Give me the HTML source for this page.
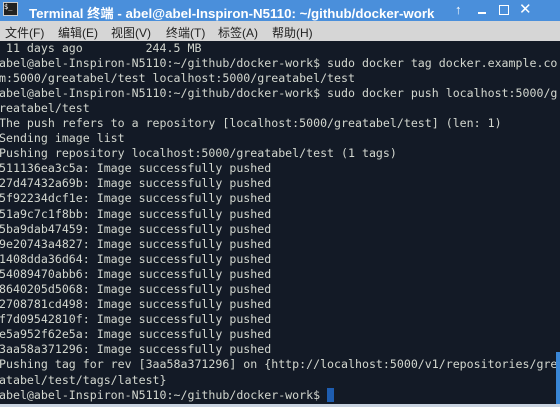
<!DOCTYPE html>
<html><head><meta charset="utf-8"><style>
html,body{margin:0;padding:0;width:560px;height:407px;overflow:hidden;background:#131a26}
#title{position:absolute;left:0;top:0;width:560px;height:21px;background:#4a8fdb;color:#fff;font:bold 13.3px "Liberation Sans","Noto Sans CJK SC",sans-serif;}
#title .t{position:absolute;left:29px;top:3px;white-space:nowrap}
#icon{position:absolute;left:3px;top:2px;width:13px;height:12px;background:#222;border:1px solid #ccc;color:#fff;font:7px "DejaVu Sans Mono",monospace;line-height:8px}
#menu{position:absolute;left:0;top:21px;width:560px;height:20px;background:#d6d6d6;color:#222;font:12px "Liberation Sans","Noto Sans CJK SC",sans-serif}
#menu span{position:absolute;top:3px;white-space:nowrap}
#term{position:absolute;left:-1px;top:40.5px;font-family:"DejaVu Sans Mono",monospace;font-size:11.6px;color:#d3d7cf}
#term div{height:15.1px;line-height:15.1px;white-space:pre}
.cur{display:inline-block;width:7px;height:14px;background:#1e5db0;vertical-align:-3px}
#sb{position:absolute;left:556px;top:352px;width:4px;height:52px;background:#3a87d6}
#bot{position:absolute;left:0;top:404px;width:560px;height:3px;background:#c9d3e0}
</style></head><body>
<div id="title"><div id="icon">$_</div><span class="t">Terminal 终端 - abel@abel-Inspiron-N5110: ~/github/docker-work</span>
<span style="position:absolute;left:455px;top:2px;font-size:13px">↑</span>
<span style="position:absolute;left:478px;top:12px;width:8px;height:2px;background:#fff"></span>
<span style="position:absolute;left:499px;top:5px;width:8px;height:8px;border:1.5px solid #fff"></span>
<span style="position:absolute;left:519px;top:0px;font-size:15px;font-weight:normal">✕</span></div>
<div id="menu"><span style="left:5px">文件(F)</span><span style="left:58px">编辑(E)</span><span style="left:111px">视图(V)</span><span style="left:166px">终端(T)</span><span style="left:218px">标签(A)</span><span style="left:272px">帮助(H)</span></div>
<div id="term"><div> 11 days ago         244.5 MB</div><div>abel@abel-Inspiron-N5110:~/github/docker-work$ sudo docker tag docker.example.co</div><div>m:5000/greatabel/test localhost:5000/greatabel/test</div><div>abel@abel-Inspiron-N5110:~/github/docker-work$ sudo docker push localhost:5000/g</div><div>reatabel/test</div><div>The push refers to a repository [localhost:5000/greatabel/test] (len: 1)</div><div>Sending image list</div><div>Pushing repository localhost:5000/greatabel/test (1 tags)</div><div>511136ea3c5a: Image successfully pushed</div><div>27d47432a69b: Image successfully pushed</div><div>5f92234dcf1e: Image successfully pushed</div><div>51a9c7c1f8bb: Image successfully pushed</div><div>5ba9dab47459: Image successfully pushed</div><div>9e20743a4827: Image successfully pushed</div><div>1408dda36d64: Image successfully pushed</div><div>54089470abb6: Image successfully pushed</div><div>8640205d5068: Image successfully pushed</div><div>2708781cd498: Image successfully pushed</div><div>f7d09542810f: Image successfully pushed</div><div>e5a952f62e5a: Image successfully pushed</div><div>3aa58a371296: Image successfully pushed</div><div>Pushing tag for rev [3aa58a371296] on {http://localhost:5000/v1/repositories/gre</div><div>atabel/test/tags/latest}</div><div>abel@abel-Inspiron-N5110:~/github/docker-work$ <span class="cur"></span></div></div>
<div id="sb"></div><div id="bot"></div>
</body></html>
